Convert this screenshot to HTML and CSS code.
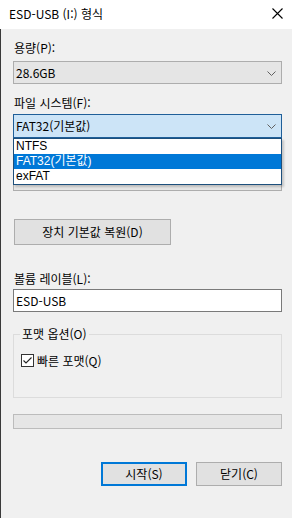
FILE: index.html
```html
<!DOCTYPE html>
<html lang="ko">
<head>
<meta charset="utf-8">
<title>ESD-USB (I:) 형식</title>
<link rel="stylesheet" href="styles.css">
</head>
<body>
<div class="window">
  <div class="titlebar">
    <span class="title">ESD-USB (I:) 형식</span>
    <svg class="close" width="11" height="11" viewBox="0 0 11 11"><path d="M0.5 0.5L10.5 10.5M10.5 0.5L0.5 10.5" stroke="#000" stroke-width="1.1" fill="none"/></svg>
  </div>
  <div class="content">
    <div class="label l1">용량(P):</div>
    <div class="combo c1">
      <span>28.6GB</span>
      <svg class="chev" width="9" height="5" viewBox="0 0 9 5"><path d="M0.5 0.5L4.5 4.5L8.5 0.5" stroke="#606060" fill="none"/></svg>
    </div>
    <div class="label l2">파일 시스템(F):</div>
    <div class="combo-wrap">
      <div class="combo c2 open">
        <span>FAT32(기본값)</span>
        <svg class="chev" width="9" height="5" viewBox="0 0 9 5"><path d="M0.5 0.5L4.5 4.5L8.5 0.5" stroke="#606060" fill="none"/></svg>
      </div>
      <ul class="list">
        <li>NTFS</li>
        <li class="sel">FAT32(기본값)</li>
        <li>exFAT</li>
      </ul>
    </div>
    <div class="label l3"></div>
    <div class="combo c3"></div>
    <button class="btn restore">장치 기본값 복원(D)</button>
    <div class="label l4">볼륨 레이블(L):</div>
    <div class="input">ESD-USB</div>
    <fieldset class="group">
      <legend>포맷 옵션(O)</legend>
      <div class="check-row">
        <svg class="checkbox" width="13" height="13" viewBox="0 0 13 13"><rect x="0.5" y="0.5" width="12" height="12" fill="#fff" stroke="#333"/><path d="M2.5 6.5L5 9L10.5 3.5" stroke="#222" stroke-width="1.1" fill="none"/></svg>
        <span>빠른 포맷(Q)</span>
      </div>
    </fieldset>
    <div class="progress"></div>
    <div class="actions">
      <button class="btn start">시작(S)</button>
      <button class="btn closebtn">닫기(C)</button>
    </div>
  </div>
</div>
</body>
</html>
```

FILE: styles.css
```css
html, body {
  margin: 0;
  padding: 0;
  width: 292px;
  height: 518px;
  overflow: hidden;
}
body {
  font-family: "Noto Sans CJK KR", "Noto Sans", sans-serif;
  font-size: 12px;
  color: #000;
  background: #f0f0f0;
}
.window {
  width: 292px;
  height: 518px;
  display: flex;
  flex-direction: column;
}
.titlebar {
  height: 29px;
  flex: none;
  background: #fff;
  display: flex;
  align-items: center;
  justify-content: space-between;
  padding: 0 9px 0 9px;
  box-sizing: border-box;
}
.title {
  font-size: 12px;
  line-height: 16px;
  margin-top: -2px;
}
.close {
  display: block;
  margin-top: -2px;
}
.content {
  flex: 1;
  background: #f0f0f0;
  border-left: 1px solid #3a3a3a;
  padding: 11px 10px 0 12px;
  display: flex;
  flex-direction: column;
}
.label {
  height: 16px;
  line-height: 16px;
  padding-left: 1px;
  white-space: nowrap;
}
.l2 { margin-top: 11px; }
.l3 { margin-top: 13px; }
.l4 { margin-top: 26px; }
.combo {
  box-sizing: border-box;
  height: 23px;
  border: 1px solid #adadad;
  background: #e5e5e5;
  display: flex;
  align-items: center;
  justify-content: space-between;
  padding: 0 5px 0 2px;
  line-height: 16px;
}
.c1 { margin-top: 5px; }
.combo-wrap {
  position: relative;
  margin-top: 3px;
}
.c2 {
  height: 24px;
  background: #cce4f7;
  border-color: #1f5f99;
}
.c3 { margin-top: 1px; }
.chev { display: block; margin-top: 1px; }
.list {
  position: absolute;
  top: 100%;
  left: 0;
  right: 0;
  margin: 0;
  padding: 0;
  list-style: none;
  background: #fff;
  border: 1px solid #1d4f7c;
  box-shadow: 2px 2px 2px rgba(0,0,0,0.18);
  z-index: 2;
  font-family: "Liberation Sans", "Noto Sans CJK KR", sans-serif;
}
.list li {
  height: 15px;
  line-height: 15px;
  padding-left: 2px;
}
.list li.sel {
  background: #0078d7;
  color: #fff;
}
.btn {
  font-family: "Noto Sans CJK KR", "Noto Sans", sans-serif;
  font-size: 12px;
  color: #000;
  background: #e1e1e1;
  border: 1px solid #adadad;
  box-sizing: border-box;
  padding: 0;
  line-height: 16px;
  border-radius: 0;
}
.restore {
  margin-top: 28px;
  width: 157px;
  height: 26px;
  margin-left: 1px;
}
.input {
  box-sizing: border-box;
  height: 23px;
  margin-top: 2px;
  border: 1px solid #7a7a7a;
  background: #fff;
  line-height: 21px;
  padding-left: 2px;
}
.group {
  margin: 14px 0 0 0;
  border: 1px solid #dcdcdc;
  padding: 10px 6px 29px 6px;
  min-width: 0;
}
.group legend {
  padding: 0 2px;
  line-height: 16px;
  height: 16px;
}
.check-row {
  display: flex;
  align-items: center;
  height: 16px;
  gap: 3px;
  padding-left: 1px;
}
.checkbox { display: block; }
.progress {
  margin-top: 16px;
  height: 15px;
  box-sizing: border-box;
  border: 1px solid #bcbcbc;
  background: #e6e6e6;
}
.actions {
  margin-top: 33px;
  display: flex;
  justify-content: flex-end;
  gap: 9px;
}
.actions .btn {
  width: 86px;
  height: 24px;
}
.start {
  border: 2px solid #0078d7;
}
```
